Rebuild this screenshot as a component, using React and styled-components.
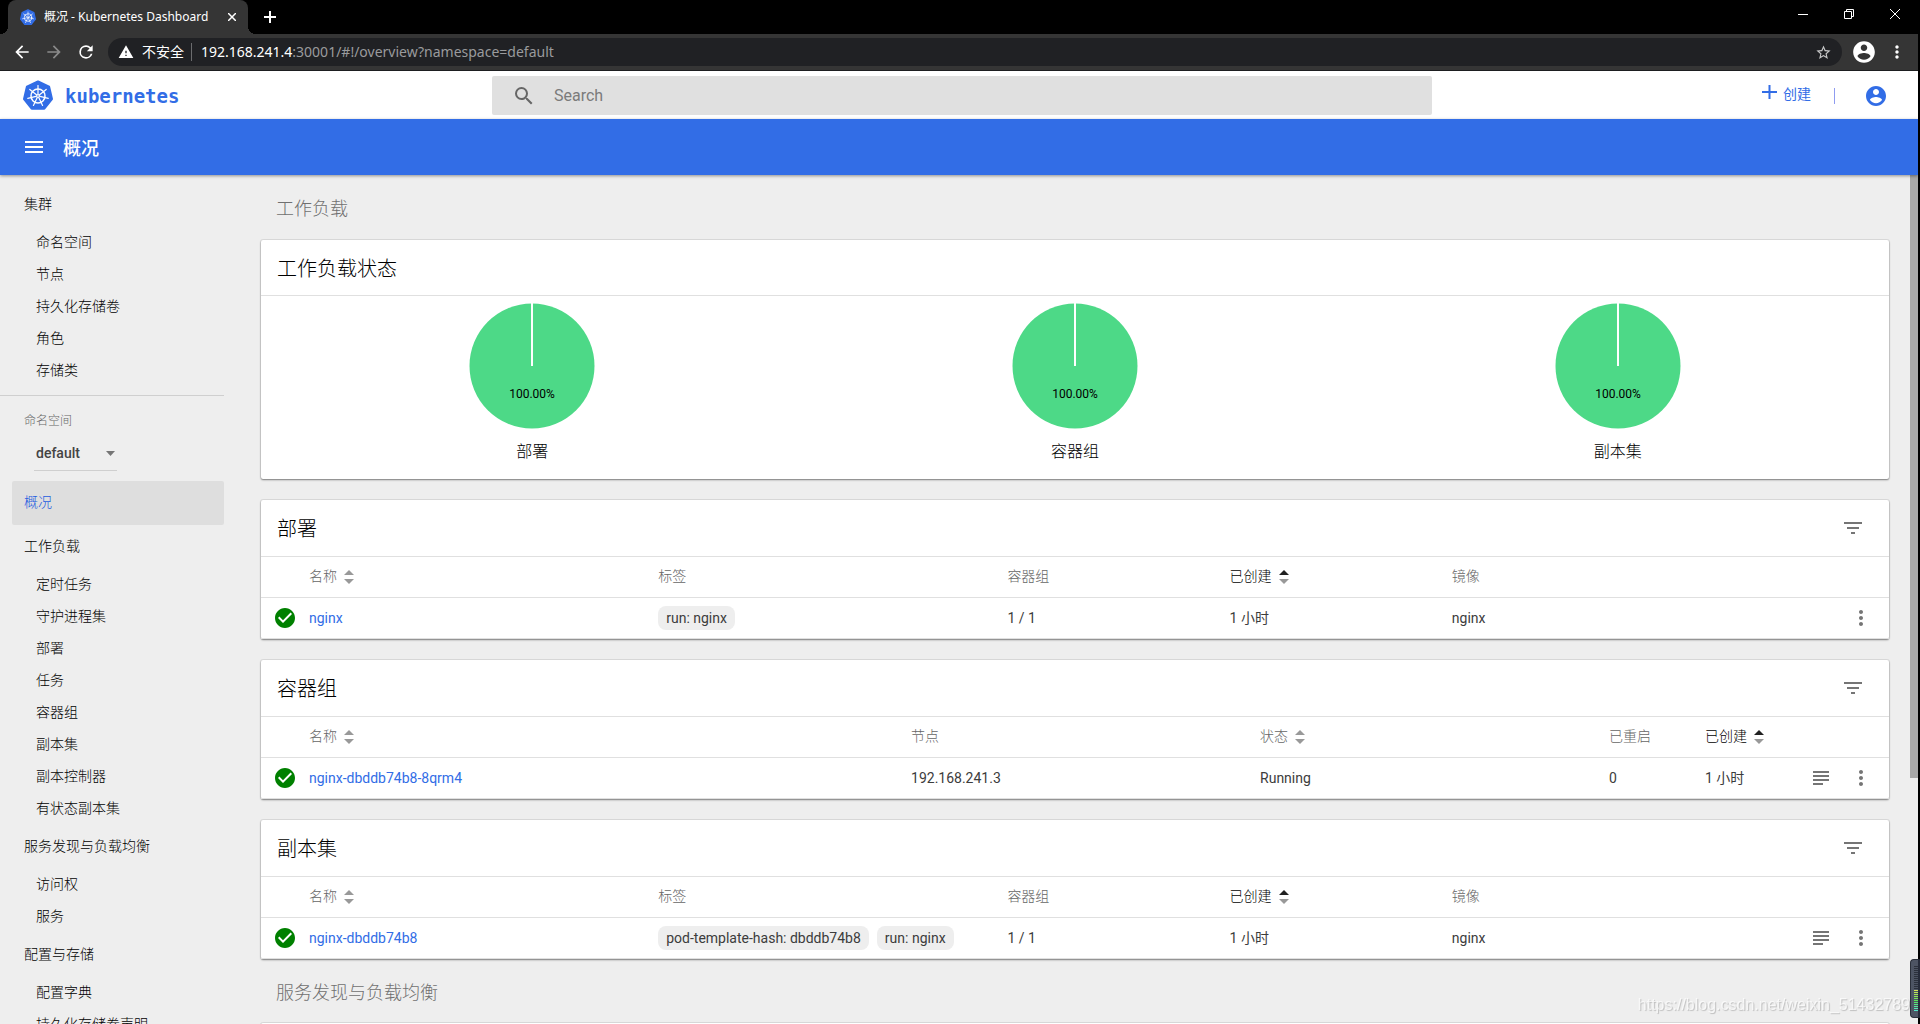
import React from "react";
import styled, { createGlobalStyle } from "styled-components";

const BLUE = "#326de6";

const GlobalStyle = createGlobalStyle`
  *, *::before, *::after { box-sizing: border-box; }
  html, body { margin: 0; overflow: hidden; background: #000; }
  body {
    font-family: Roboto, "Noto Sans CJK SC", sans-serif;
    font-size: 14px;
    color: #111;
  }
  button, input, select { font: inherit; color: inherit; }
  button { border: 0; padding: 0; background: none; cursor: pointer; display: inline-flex; align-items: center; justify-content: center; }
  a { color: inherit; text-decoration: none; }
  ul { list-style: none; margin: 0; padding: 0; }
  h1, h2, h3 { margin: 0; font-weight: 400; }
  svg { display: block; flex: none; }
`;

const Window = styled.div`
  height: 100vh;
  display: flex;
  flex-direction: column;
  border-right: 2px solid #000;
  overflow: hidden;
  background: #eee;
`;

/* ---------- browser frame ---------- */

const TabStrip = styled.div`
  flex: none;
  height: 34px;
  display: flex;
  background: #000;
  color: #fff;
  padding-left: 8px;
`;

const Tab = styled.div`
  position: relative;
  width: 240px;
  display: flex;
  align-items: center;
  gap: 8px;
  padding: 0 8px 0 12px;
  border-radius: 8px 8px 0 0;
  background: #353535;
  font: 12px/16px "Noto Sans", "Noto Sans CJK SC", sans-serif;

  &::before, &::after {
    content: "";
    position: absolute;
    bottom: 0;
    width: 8px;
    height: 8px;
  }
  &::before { left: -8px; background: radial-gradient(circle at 0 0, #000 8px, #353535 8px); }
  &::after { right: -8px; background: radial-gradient(circle at 100% 0, #000 8px, #353535 8px); }
`;

const TabTitle = styled.span`
  flex: 1;
  white-space: nowrap;
`;

const TabButton = styled.button`
  width: 16px;
  height: 16px;
  align-self: center;
`;

const NewTab = styled(TabButton)`
  margin-left: 14px;
`;

const WindowControls = styled.div`
  margin-left: auto;
  display: flex;
  height: 28px;
`;

const WindowButton = styled.button`
  width: 46px;
`;

const Toolbar = styled.div`
  flex: none;
  height: 37px;
  display: flex;
  align-items: center;
  background: #353535;
  border-bottom: 1px solid #1d1e20;
  padding: 0 11px 0 6px;
  color: #fff;
`;

const NavButton = styled.button`
  width: 32px;
  height: 28px;
  color: ${(p) => (p.$dim ? "#8a8a8a" : "#fff")};
`;

const Omnibox = styled.div`
  flex: 1;
  height: 28px;
  display: flex;
  align-items: center;
  margin-left: 6px;
  padding: 0 10px;
  border-radius: 14px;
  background: #202124;
  font: 14px/20px "Noto Sans", "Noto Sans CJK SC", sans-serif;
`;

const Insecure = styled.span`
  margin-left: 8px;
  padding-right: 7px;
  border-right: 1px solid #6b6c6e;
  line-height: 18px;
`;

const Address = styled.span`
  flex: 1;
  padding-left: 9px;
  color: #9a9b9d;
  white-space: nowrap;
  b { font-weight: 400; color: #fff; }
`;

const ProfileButton = styled.button`
  width: 26px;
  margin-left: 9px;
`;

const MenuButton = styled.button`
  width: 20px;
  margin-left: 10px;
`;

/* ---------- dashboard header ---------- */

const Header = styled.header`
  flex: none;
  height: 48px;
  display: flex;
  align-items: center;
  background: #fff;
  padding: 2px 30px 0 22px;
`;

const Brand = styled.a`
  flex: 0 0 470px;
  display: flex;
  align-items: center;
  gap: 11px;
  color: ${BLUE};
  font: 700 19px/24px "DejaVu Sans Mono", monospace;
`;

const SearchBox = styled.label`
  flex: 0 1 940px;
  align-self: flex-start;
  height: 39px;
  margin-top: 3px;
  display: flex;
  align-items: center;
  gap: 18px;
  padding-left: 20px;
  border-radius: 2px;
  background: #e0e0e0;
  color: #666;
  input {
    flex: 1;
    border: 0;
    outline: 0;
    background: none;
    padding: 0;
    font-size: 16px;
    line-height: 24px;
  }
  input::placeholder { color: #7b7b7b; opacity: 1; }
`;

const HeaderActions = styled.div`
  margin-left: auto;
  display: flex;
  align-items: center;
  color: ${BLUE};
`;

const CreateButton = styled.button`
  gap: 6px;
  padding: 0 23px 4px 0;
  line-height: 20px;
  svg { margin-bottom: 4px; }
`;

const Separator = styled.span`
  width: 1px;
  height: 16px;
  margin-right: 29px;
  background: #8f9cf0;
`;

const ActionBar = styled.div`
  flex: none;
  position: relative;
  z-index: 1;
  height: 56px;
  display: flex;
  align-items: center;
  gap: 17px;
  padding: 0 22px;
  background: ${BLUE};
  color: #fff;
  box-shadow: 0 1px 3px rgba(0, 0, 0, 0.4);
  h1 { font-size: 18px; line-height: 24px; font-weight: 500; padding-top: 4px; }
`;

/* ---------- body ---------- */

const Body = styled.div`
  flex: 1;
  min-height: 0;
  display: flex;
`;

const Sidebar = styled.nav`
  flex: 0 0 224px;
  overflow: hidden;
  padding-top: 8px;
`;

const navRow = `
  display: flex;
  align-items: center;
  padding-bottom: 4px;
  font-size: 14px;
  font-weight: 300;
  white-space: nowrap;
`;

const NavHeading = styled.a`
  ${navRow}
  height: 44px;
  margin-left: 12px;
  padding-left: 12px;
  border-radius: 2px;
  color: ${(p) => (p.$active ? "#1f5ce0" : "#000")};
  background: ${(p) => (p.$active ? "#dedede" : "none")};
`;

const NavItem = styled.a`
  ${navRow}
  height: 32px;
  padding-left: 36px;
  color: #000;
`;

const NamespacePicker = styled.div`
  margin-top: 8px;
  border-top: 1px solid #cfcfcf;
  padding: 15px 0 10px 24px;
  label {
    display: block;
    font-size: 12px;
    line-height: 20px;
    font-weight: 300;
    color: #666;
  }
`;

const SelectWrap = styled.div`
  display: flex;
  align-items: center;
  width: 83px;
  height: 35px;
  margin: 5px 0 0 10px;
  padding-right: 2px;
  border-bottom: 1px solid #cfcfcf;
  color: #757575;
  select {
    flex: 1;
    min-width: 0;
    appearance: none;
    border: 0;
    outline: 0;
    background: none;
    padding: 0 0 0 2px;
    color: #444;
    font-weight: 500;
    line-height: 20px;
  }
`;

const Content = styled.main`
  flex: 1;
  min-width: 0;
  overflow: hidden;
  padding: 0 21px 0 37px;
`;

const SectionTitle = styled.h2`
  height: ${(p) => (p.$first ? 65 : 64)}px;
  padding-left: 15px;
  font-size: 18px;
  line-height: 67px;
  font-weight: 300;
  color: #707070;
`;

const Card = styled.section`
  background: #fff;
  border-radius: 2px;
  box-shadow: 0 1px 2px rgba(0, 0, 0, 0.45), 0 0 0 1px rgba(0, 0, 0, 0.07);
  & + & { margin-top: 21px; }
`;

const CardHeader = styled.div`
  display: flex;
  align-items: center;
  justify-content: space-between;
  height: ${(p) => (p.$tall ? 57 : 56)}px;
  padding: 0 24px 0 16px;
  border-bottom: 1px solid #e0e0e0;
  color: #757575;
  h3 { font-size: 20px; line-height: 28px; font-weight: 300; color: #000; padding-top: 2px; }
`;

const Charts = styled.div`
  display: grid;
  grid-template-columns: repeat(3, 1fr);
  padding: 7px 0 15px;
`;

const Chart = styled.figure`
  margin: 0;
  display: flex;
  flex-direction: column;
  align-items: center;
  gap: 11px;
  figcaption { font-size: 16px; line-height: 24px; font-weight: 300; color: #000; }
`;

const Table = styled.table`
  display: block;
  thead, tbody { display: block; }
  tr {
    display: grid;
    grid-template-columns: ${(p) => p.$columns};
    align-items: center;
    height: 41px;
    border-bottom: 1px solid #e0e0e0;
  }
`;

const HeadCell = styled.th`
  padding: 0 0 2px;
  text-align: left;
  font-size: 14px;
  line-height: 20px;
  font-weight: 300;
  white-space: nowrap;
  color: ${(p) => (p.$active ? "#000" : "#666")};
  button { gap: 7px; font-weight: inherit; }
  svg { margin-top: 2px; }
`;

const DataCell = styled.td`
  padding: 0;
  font-size: 14px;
  line-height: 20px;
  white-space: nowrap;
  color: #3c3c3c;
`;

const StatusCell = styled.td`
  display: flex;
  padding: 0 0 0 12px;
`;

const ResourceLink = styled.a`
  color: ${BLUE};
`;

const Chips = styled.ul`
  display: flex;
  gap: 8px;
  li {
    padding: 0 8px;
    border-radius: 8px;
    background: #eee;
    line-height: 24px;
  }
`;

const ActionsCell = styled.td`
  display: flex;
  justify-content: flex-end;
  align-items: center;
  gap: 16px;
  padding: 0 16px 0 0;
  color: #757575;
`;

const ScrollTrack = styled.div`
  flex: 0 0 8px;
  background: #eee;
`;

const ScrollThumb = styled.div`
  height: 71%;
  background: #a8a8a8;
`;

const Meter = styled.div`
  position: fixed;
  right: 0;
  bottom: 6px;
  z-index: 3;
  width: 10px;
  height: 59px;
  border: 1px solid #2a2f3a;
  border-right: 2px solid #262b3a;
  border-radius: 4px 0 0 4px;
  background: #4d5463;
  padding: 6px 0 6px 3px;
`;

const Watermark = styled.div`
  position: fixed;
  right: 10px;
  bottom: 8px;
  z-index: 2;
  font: 16px/22px "Liberation Sans", sans-serif;
  color: rgba(255, 255, 255, 0.7);
  text-shadow: 1px 1px 1px rgba(0, 0, 0, 0.2);
`;

/* ---------- drawings ---------- */

const Glyph = ({ d, size = 24, ...rest }) => (
  <svg width={size} height={size} viewBox="0 0 24 24" fill="currentColor" aria-hidden="true" {...rest}>
    <path d={d} />
  </svg>
);

const PATHS = {
  search: "M15.5 14h-.79l-.28-.27A6.47 6.47 0 0 0 16 9.5 6.5 6.5 0 1 0 9.5 16c1.61 0 3.09-.59 4.23-1.57l.27.28v.79l5 4.99L20.49 19l-4.99-5zm-6 0C7.01 14 5 11.99 5 9.5S7.01 5 9.5 5 14 7.01 14 9.5 11.99 14 9.5 14z",
  account: "M12 2C6.48 2 2 6.48 2 12s4.48 10 10 10 10-4.48 10-10S17.52 2 12 2zm0 3c1.66 0 3 1.34 3 3s-1.34 3-3 3-3-1.34-3-3 1.34-3 3-3zm0 14.2c-2.5 0-4.71-1.28-6-3.22.03-1.99 4-3.08 6-3.08 1.99 0 5.97 1.09 6 3.08-1.29 1.94-3.5 3.22-6 3.22z",
  menu: "M3 18h18v-2H3v2zm0-5h18v-2H3v2zm0-7v2h18V6H3z",
  back: "M20 11H7.83l5.59-5.59L12 4l-8 8 8 8 1.41-1.41L7.83 13H20v-2z",
  forward: "M12 4l-1.41 1.41L16.17 11H4v2h12.17l-5.58 5.59L12 20l8-8z",
  reload: "M17.65 6.35A7.96 7.96 0 0 0 12 4a8 8 0 1 0 7.73 10h-2.08A6 6 0 1 1 12 6c1.66 0 3.14.69 4.22 1.78L13 11h7V4l-2.35 2.35z",
  warning: "M1 21h22L12 2 1 21zm12-3h-2v-2h2v2zm0-4h-2v-4h2v4z",
  star: "M22 9.24l-7.19-.62L12 2 9.19 8.63 2 9.24l5.46 4.73L5.82 21 12 17.27 18.18 21l-1.63-7.03L22 9.24zM12 15.4l-3.76 2.27 1-4.28-3.32-2.88 4.38-.38L12 6.1l1.71 4.04 4.38.38-3.32 2.88 1 4.28L12 15.4z",
  more: "M12 8c1.1 0 2-.9 2-2s-.9-2-2-2-2 .9-2 2 .9 2 2 2zm0 2c-1.1 0-2 .9-2 2s.9 2 2 2 2-.9 2-2-.9-2-2-2zm0 6c-1.1 0-2 .9-2 2s.9 2 2 2 2-.9 2-2-.9-2-2-2z",
  filter: "M10 18h4v-2h-4v2zM3 6v2h18V6H3zm3 7h12v-2H6v2z",
  logs: "M14 17H4v2h10v-2zm6-8H4v2h16V9zM4 15h16v-2H4v2zM4 5v2h16V5H4z",
  check: "M12 2C6.48 2 2 6.48 2 12s4.48 10 10 10 10-4.48 10-10S17.52 2 12 2zm-2 15l-5-5 1.41-1.41L10 14.17l7.59-7.59L19 8l-9 9z",
};

const Helm = ({ size }) => {
  const spokes = Array.from({ length: 7 }, (_, i) => (i * 360) / 7);
  return (
    <svg width={size} height={size} viewBox={size < 20 ? "1 0 30 30" : "0 0 32 32"} aria-hidden="true">
      <path
        d="M16 1.6 27 6.9 29.8 18.9 22.2 28.6H9.8L2.2 18.9 5 6.9Z"
        fill={BLUE}
        stroke={BLUE}
        strokeWidth="2.4"
        strokeLinejoin="round"
      />
      <g transform="translate(16 16)" fill="none" stroke="#fff" strokeLinecap="round">
        <circle r="7" strokeWidth="1.5" />
        <circle r="1.4" strokeWidth="1.2" />
        {spokes.map((a) => (
          <path key={a} d="M0-2V-10.5" strokeWidth="1.2" transform={`rotate(${a})`} />
        ))}
      </g>
    </svg>
  );
};

const SortIcon = ({ active }) => (
  <svg width="10" height="14" viewBox="0 0 10 14" aria-hidden="true">
    <path d="M0 5 5 0l5 5z" fill={active ? "#212121" : "#999"} />
    <path d="M0 9h10l-5 5z" fill="#999" />
  </svg>
);

const Pie = ({ label }) => (
  <Chart>
    <svg width="126" height="126" viewBox="0 0 126 126" role="img" aria-label={`${label} 100.00%`}>
      <circle cx="63" cy="63" r="62.5" fill="#4dd987" />
      <path d="M63 0V63" stroke="#fff" strokeWidth="2" />
      <text x="63" y="95" textAnchor="middle" fontSize="12" fill="#000">100.00%</text>
    </svg>
    <figcaption>{label}</figcaption>
  </Chart>
);

const MeterBars = () => (
  <svg width="4" height="45" viewBox="0 0 4 45" aria-hidden="true">
    {Array.from({ length: 23 }, (_, i) => (
      <rect key={i} y={i * 2} width="4" height="1" fill={i < 12 ? "#2c313c" : `hsl(${68 + (i - 12) * 10} 75% 62%)`} />
    ))}
  </svg>
);

/* ---------- content ---------- */

const CLUSTER = ["命名空间", "节点", "持久化存储卷", "角色", "存储类"];

const GROUPS = [
  { title: "工作负载", items: ["定时任务", "守护进程集", "部署", "任务", "容器组", "副本集", "副本控制器", "有状态副本集"] },
  { title: "服务发现与负载均衡", items: ["访问权", "服务"] },
  { title: "配置与存储", items: ["配置字典", "持久化存储卷声明"] },
];

const WORKLOAD_COLUMNS = "48px 11fr 11fr 7fr 7fr 11fr 88px";
const POD_COLUMNS = "48px 69fr 40fr 40fr 11fr 11fr 88px";

const NAME = { text: "名称", sort: true };
const CREATED = { text: "已创建", sort: true, active: true };

const LISTS = [
  {
    title: "部署",
    columns: WORKLOAD_COLUMNS,
    head: [NAME, { text: "标签" }, { text: "容器组" }, CREATED, { text: "镜像" }],
    row: ["nginx", ["run: nginx"], "1 / 1", "1 小时", "nginx"],
  },
  {
    title: "容器组",
    columns: POD_COLUMNS,
    head: [NAME, { text: "节点" }, { text: "状态", sort: true }, { text: "已重启" }, CREATED],
    row: ["nginx-dbddb74b8-8qrm4", "192.168.241.3", "Running", "0", "1 小时"],
    logs: true,
  },
  {
    title: "副本集",
    columns: WORKLOAD_COLUMNS,
    head: [NAME, { text: "标签" }, { text: "容器组" }, CREATED, { text: "镜像" }],
    row: ["nginx-dbddb74b8", ["pod-template-hash: dbddb74b8", "run: nginx"], "1 / 1", "1 小时", "nginx"],
    logs: true,
  },
];

const NavGroup = ({ title, items }) => (
  <>
    <NavHeading href="#">{title}</NavHeading>
    {items.map((item) => (
      <NavItem href="#" key={item}>{item}</NavItem>
    ))}
  </>
);

const Cell = ({ value, first }) => {
  if (first) return <ResourceLink href="#">{value}</ResourceLink>;
  if (Array.isArray(value)) return <Chips>{value.map((v) => <li key={v}>{v}</li>)}</Chips>;
  return value;
};

const ResourceList = ({ title, columns, head, row, logs }) => (
  <Card>
    <CardHeader $tall>
      <h3>{title}</h3>
      <button aria-label="过滤"><Glyph d={PATHS.filter} /></button>
    </CardHeader>
    <Table $columns={columns}>
      <thead>
        <tr>
          <HeadCell />
          {head.map((h) => (
            <HeadCell key={h.text} $active={h.active}>
              {h.sort ? <button>{h.text}<SortIcon active={h.active} /></button> : h.text}
            </HeadCell>
          ))}
          <HeadCell />
        </tr>
      </thead>
      <tbody>
        <tr>
          <StatusCell><Glyph d={PATHS.check} fill="#008000" /></StatusCell>
          {row.map((value, i) => (
            <DataCell key={i}><Cell value={value} first={i === 0} /></DataCell>
          ))}
          <ActionsCell>
            {logs && <button aria-label="日志"><Glyph d={PATHS.logs} /></button>}
            <button aria-label="更多"><Glyph d={PATHS.more} /></button>
          </ActionsCell>
        </tr>
      </tbody>
    </Table>
  </Card>
);

export default function App() {
  return (
    <Window>
      <GlobalStyle />
      <TabStrip>
        <Tab>
          <Helm size={16} />
          <TabTitle>概况 - Kubernetes Dashboard</TabTitle>
          <TabButton aria-label="关闭标签页">
            <svg width="8" height="8" viewBox="0 0 8 8" stroke="#fff" strokeWidth="1.5"><path d="M0 0 8 8M8 0 0 8" /></svg>
          </TabButton>
        </Tab>
        <NewTab aria-label="新标签页">
          <svg width="12" height="12" viewBox="0 0 12 12" stroke="#fff" strokeWidth="2"><path d="M6 0V12M0 6H12" /></svg>
        </NewTab>
        <WindowControls>
          <WindowButton aria-label="最小化">
            <svg width="10" height="10" viewBox="0 0 10 10"><path d="M0 5.5H10" stroke="#fff" /></svg>
          </WindowButton>
          <WindowButton aria-label="还原">
            <svg width="10" height="10" viewBox="0 0 10 10" fill="none" stroke="#fff"><path d="M.5 2.5h7v7h-7zM2.5 2.5v-2h7v7h-2" /></svg>
          </WindowButton>
          <WindowButton aria-label="关闭">
            <svg width="10" height="10" viewBox="0 0 10 10" stroke="#fff"><path d="M0 0 10 10M10 0 0 10" /></svg>
          </WindowButton>
        </WindowControls>
      </TabStrip>
      <Toolbar>
        <NavButton aria-label="后退"><Glyph d={PATHS.back} size={20} /></NavButton>
        <NavButton aria-label="前进" $dim><Glyph d={PATHS.forward} size={20} /></NavButton>
        <NavButton aria-label="重新加载"><Glyph d={PATHS.reload} size={20} /></NavButton>
        <Omnibox>
          <Glyph d={PATHS.warning} size={16} />
          <Insecure>不安全</Insecure>
          <Address><b>192.168.241.4</b>:30001/#!/overview?namespace=default</Address>
          <button aria-label="收藏"><Glyph d={PATHS.star} size={17} opacity="0.75" /></button>
        </Omnibox>
        <ProfileButton aria-label="用户"><Glyph d={PATHS.account} size={26} /></ProfileButton>
        <MenuButton aria-label="菜单"><Glyph d={PATHS.more} size={20} /></MenuButton>
      </Toolbar>

      <Header>
        <Brand href="#"><Helm size={32} />kubernetes</Brand>
        <SearchBox>
          <Glyph d={PATHS.search} />
          <input type="text" placeholder="Search" aria-label="Search" />
        </SearchBox>
        <HeaderActions>
          <CreateButton>
            <svg width="15" height="14" viewBox="0 0 15 14" stroke="currentColor" strokeWidth="2"><path d="M7.5 0V14M0 7H15" /></svg>
            创建
          </CreateButton>
          <Separator />
          <button aria-label="账户"><Glyph d={PATHS.account} /></button>
        </HeaderActions>
      </Header>
      <ActionBar>
        <button aria-label="菜单"><Glyph d={PATHS.menu} /></button>
        <h1>概况</h1>
      </ActionBar>

      <Body>
        <Sidebar>
          <NavGroup title="集群" items={CLUSTER} />
          <NamespacePicker>
            <label htmlFor="namespace">命名空间</label>
            <SelectWrap>
              <select id="namespace" defaultValue="default">
                <option>default</option>
              </select>
              <svg width="9" height="5" viewBox="0 0 9 5" aria-hidden="true"><path d="M0 0H9L4.5 5Z" fill="currentColor" /></svg>
            </SelectWrap>
          </NamespacePicker>
          <NavHeading href="#" $active>概况</NavHeading>
          {GROUPS.map((g) => <NavGroup key={g.title} {...g} />)}
        </Sidebar>

        <Content>
          <SectionTitle $first>工作负载</SectionTitle>
          <Card>
            <CardHeader><h3>工作负载状态</h3></CardHeader>
            <Charts>
              <Pie label="部署" />
              <Pie label="容器组" />
              <Pie label="副本集" />
            </Charts>
          </Card>
          {LISTS.map((list) => <ResourceList key={list.title} {...list} />)}
          <SectionTitle>服务发现与负载均衡</SectionTitle>
          <Card>
            <CardHeader />
          </Card>
        </Content>
        <ScrollTrack><ScrollThumb /></ScrollTrack>
      </Body>

      <Watermark>https://blog.csdn.net/weixin_51432789</Watermark>
      <Meter><MeterBars /></Meter>
    </Window>
  );
}
